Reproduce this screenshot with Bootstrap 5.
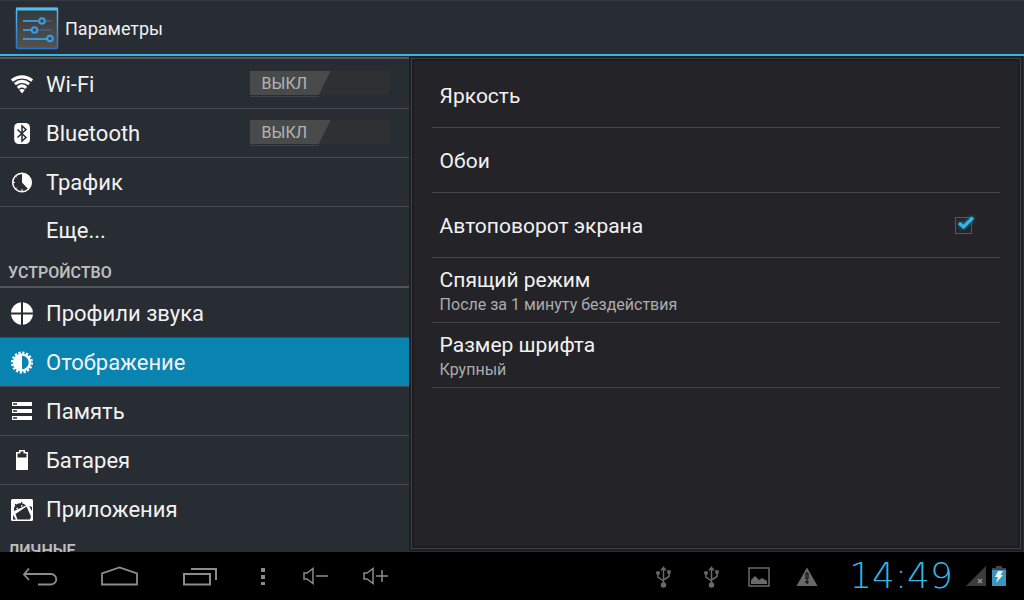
<!DOCTYPE html>
<html lang="ru">
<head>
<meta charset="utf-8">
<meta name="viewport" content="width=device-width, initial-scale=1">
<title>Параметры</title>
<link href="https://cdn.jsdelivr.net/npm/bootstrap@5.3.0/dist/css/bootstrap.min.css" rel="stylesheet">
<style>
body { background: #282c33; color: #f2f2f2; font-family: Roboto, sans-serif; font-size: 22px; line-height: 28px; }
a, a:hover { color: inherit; text-decoration: none; }
svg { display: block; flex: none; }
.topbar { height: 56px; background: #282c33; border-top: 1px solid #33373e; border-bottom: 2px solid #33b5e5; padding: 0 0 0 15px; }
.topbar h1 { font-size: 18px; line-height: 28px; font-weight: 400; margin: 2px 0 0 6px; }
.side { flex: 0 0 calc(40% - 1px); padding-top: 1px; }
.side ul { padding-top: 1px; }
.side-list { border-top: 2px solid #53565a; }
.side-row { height: 49px; border-bottom: 1px solid #494c50; padding: 2px 20px 0 10px; }
.side-row.bare { border-bottom-color: transparent; }
.side-row.more { padding-left: 46px; padding-top: 0; }
.side-row.current { background: #0983af; }
.side-row > a { gap: 12px; }
.side-head { height: 32px; border-bottom: 2px solid #53565a; padding: 3px 8px 0; margin: 0; font-size: 16px; line-height: 28px; font-weight: 600; color: #bdbdbd; }
.toggle { width: 139px; height: 26px; margin-bottom: 2px; }
.toggle input { appearance: none; display: block; width: 100%; height: 24px; margin: 0; background: #2f3031; }
.toggle span { left: 0; top: 0; width: 81px; height: 24px; padding-left: 12px; background: #494b4b; clip-path: polygon(0 0, 100% 0, 69px 100%, 0 100%); color: #b4b4b4; font-size: 16px; line-height: 25px; pointer-events: none; }
.toggle::after { content: ""; display: block; width: 69px; height: 1px; margin-top: 1px; background: #3b444b; }
.pane { margin: 2px 3px 3px 2px; border: 1px solid #3d4246; outline: 2px solid #1c2024; background: #242328; box-shadow: inset 0 0 0 2px #1b1c20; padding: 4px 20px 0; font-size: 21px; }
.pref { height: 65px; border-bottom: 1px solid #454549; padding: 2px 25px 0 8px; }
.pref.two-line { padding-top: 0; }
.pref small { display: block; font-size: 16px; line-height: 21px; color: #acacac; }
.check { position: relative; width: 20px; height: 20px; }
.check input { appearance: none; display: block; width: 17px; height: 17px; margin: 1px 0 0; border: 1px solid #57585c; background: transparent; }
.check svg { position: absolute; left: 2px; top: -1px; filter: drop-shadow(0 0 2px #128ab8); }
.check input:not(:checked) + svg { display: none; }
.sysbar { height: 48px; background: #000; color: #8c8c8c; }
.sysbar button { background: none; border: 0; padding: 0; color: inherit; width: 80px; height: 48px; display: flex; align-items: center; justify-content: center; }
.sysbar button.key-menu { width: 46px; }
.sysbar button.key-volume { width: 60px; }
.status { color: #696969; }
.clock { font-family: "DejaVu Sans ExtraLight", "DejaVu Sans Light", "DejaVu Sans", sans-serif; font-weight: 200; font-size: 36px; line-height: 48px; color: #33b5e5; width: 110px; text-align: center; }
</style>
</head>
<body class="vh-100 d-flex flex-column overflow-hidden">
<header class="topbar d-flex align-items-center flex-shrink-0">
  <svg width="44" height="44" viewBox="0 0 44 44">
    <defs><linearGradient id="tile" x2="0" y2="1"><stop stop-color="#35393b"/><stop offset="1" stop-color="#55524e"/></linearGradient><linearGradient id="rim" x2="0" y2="1"><stop stop-color="#52c0f2"/><stop offset="1" stop-color="#2a73c4"/></linearGradient></defs>
    <rect x="1.500" y="2.500" width="41" height="40" rx="1.500" fill="url(#tile)" stroke="url(#rim)" stroke-width="1.500"/>
    <path d="M1 1.500h42v3H1z" fill="#4fc1f4"/>
    <path d="M24 15H37M18 24H37" stroke="#3a6387" stroke-width="1.500"/>
    <path d="M8 15H23M8 24H17M8 33H32" stroke="#3796e0" stroke-width="1.800"/>
    <g fill="#3e4950" stroke="#3b9ce5" stroke-width="2"><circle cx="27" cy="15" r="2.800"/><circle cx="19.500" cy="24" r="2.800"/><circle cx="35" cy="32.500" r="2.800"/></g>
  </svg>
  <h1>Параметры</h1>
</header>
<main class="d-flex flex-grow-1 overflow-hidden">
  <nav class="side overflow-hidden" aria-label="Разделы">
    <ul class="side-list list-unstyled mb-0">
      <li class="side-row d-flex align-items-center justify-content-between">
        <a href="#" class="d-flex align-items-center"><svg width="24" height="24" viewBox="0 0 24 24" fill="none" stroke="#fff" stroke-width="3"><path d="M1.800 7.500Q12 .2 22.200 7.500M4.900 11.200Q12 5.500 19.100 11.200M7.800 14.800Q12 11 16.200 14.800"/><path d="M9.200 17Q12 15 14.800 17L12 20.500z" fill="#fff" stroke="none"/></svg>Wi-Fi</a>
        <label class="toggle position-relative"><input type="checkbox" role="switch" aria-label="Wi-Fi"><span class="position-absolute">ВЫКЛ</span></label>
      </li>
      <li class="side-row d-flex align-items-center justify-content-between">
        <a href="#" class="d-flex align-items-center"><svg width="24" height="24" viewBox="0 0 24 24"><rect x="4.200" y="1" width="15.800" height="21" rx="4.500" fill="#fff"/><path d="M7.500 7.500L16 15.500 12 19V4l4 3.500L7.500 15.500" fill="none" stroke="#282c33" stroke-width="1.500"/></svg>Bluetooth</a>
        <label class="toggle position-relative"><input type="checkbox" role="switch" aria-label="Bluetooth"><span class="position-absolute">ВЫКЛ</span></label>
      </li>
      <li class="side-row d-flex align-items-center"><a href="#" class="d-flex align-items-center"><svg width="24" height="24" viewBox="0 0 24 24"><circle cx="12" cy="11.500" r="9.300" fill="none" stroke="#fff" stroke-width="1.500"/><path d="M12 2v9.500l6.500 7A10 10 0 0 0 12 2z" fill="#fff"/><path d="M3 11.500h2M12 20v-2M5.500 5l1.300 1.300M5.500 18l1.300-1.300" stroke="#fff" stroke-width="1"/></svg>Трафик</a></li>
      <li class="side-row bare more d-flex align-items-center"><a href="#">Еще...</a></li>
    </ul>
    <h2 class="side-head">УСТРОЙСТВО</h2>
    <ul class="list-unstyled mb-0">
      <li class="side-row d-flex align-items-center"><a href="#" class="d-flex align-items-center"><svg width="24" height="24" viewBox="0 0 24 24"><path d="M11 .2V10.500H1A11 11 0 0 1 11 .2zM13 .2A11 11 0 0 1 23 10.500H13zM1 12.500H11V22.700A11 11 0 0 1 1 12.500zM23 12.500A11 11 0 0 1 13 22.700V12.500z" fill="#fff"/></svg>Профили звука</a></li>
      <li class="side-row current d-flex align-items-center"><a href="#" class="d-flex align-items-center" aria-current="page"><svg width="24" height="24" viewBox="0 0 24 24"><circle cx="12" cy="11.500" r="9.700" fill="none" stroke="#fff" stroke-width="2.600" stroke-dasharray="2.200 1.609"/><circle cx="12" cy="11.500" r="7.900" fill="none" stroke="#fff" stroke-width="2.400"/><path d="M12 3.500v16A8 8 0 0 1 12 3.500z" fill="#fff"/></svg>Отображение</a></li>
      <li class="side-row d-flex align-items-center"><a href="#" class="d-flex align-items-center"><svg width="24" height="24" viewBox="0 0 24 24"><path d="M2 2h20v4H2zM2 9h20v4H2zM2 16h20v4H2z" fill="#fff"/><path d="M3 4h4M3 11h4M3 18h4" stroke="#282c33" stroke-width="1.500"/></svg>Память</a></li>
      <li class="side-row d-flex align-items-center"><a href="#" class="d-flex align-items-center"><svg width="24" height="24" viewBox="0 0 24 24"><path d="M9 1h6v2h3v18H6V3h3z" fill="#fff"/><path d="M10.500 2.500h3v2h3v4h-9v-4h3z" fill="#282c33"/></svg>Батарея</a></li>
      <li class="side-row bare d-flex align-items-center"><a href="#" class="d-flex align-items-center"><svg width="24" height="24" viewBox="0 0 24 24"><rect x="1" y="1" width="22" height="22" rx="1.500" fill="#fff"/><g fill="#282c33"><path d="M4 13C3 6.500 10 2.500 16 7.500z"/><path d="M5.500 16L16.500 8.500 21 18.500 20 21.500H7.500z"/><path d="M3 17l3 4.500H3zM19 8l3 1v4z"/></g><path d="M5 6l2 2.500M11.500 4l.5 2" stroke="#282c33" stroke-width="1.200"/><path d="M6.500 10.500h1.500M11 8h1.500" stroke="#fff" stroke-width="1.500"/></svg>Приложения</a></li>
    </ul>
    <h2 class="side-head">ЛИЧНЫЕ</h2>
  </nav>
  <section class="pane flex-grow-1" aria-label="Отображение">
    <a href="#" class="pref d-flex align-items-center">Яркость</a>
    <a href="#" class="pref d-flex align-items-center">Обои</a>
    <div class="pref d-flex align-items-center justify-content-between"><label for="rotate">Автоповорот экрана</label>
      <span class="check"><input type="checkbox" id="rotate" checked><svg width="20" height="16" viewBox="0 0 20 16"><path d="M2 8l4.500 4L16 2.500" fill="none" stroke="#33b5e5" stroke-width="3.200"/></svg></span>
    </div>
    <a href="#" class="pref two-line d-flex align-items-center"><span>Спящий режим<small>После за 1 минуту бездействия</small></span></a>
    <a href="#" class="pref two-line d-flex align-items-center"><span>Размер шрифта<small>Крупный</small></span></a>
  </section>
</main>
<footer class="sysbar d-flex align-items-center justify-content-between flex-shrink-0">
  <div class="d-flex align-items-center">
    <button type="button" aria-label="Назад"><svg width="34" height="24" viewBox="0 0 34 24" fill="none" stroke="currentColor" stroke-width="1.800"><path d="M6 4.500L1 10.500L6 16M1.500 10H28a5 5 0 0 1 0 10.500H15"/></svg></button>
    <button type="button" aria-label="Домой"><svg width="38" height="24" viewBox="0 0 38 24" fill="none" stroke="currentColor" stroke-width="1.800"><path d="M1 20.500V9.500L18.500 3.500L36 9.500V20.500z"/></svg></button>
    <button type="button" aria-label="Недавние"><svg width="34" height="24" viewBox="0 0 34 24" fill="none" stroke="currentColor" stroke-width="2"><path d="M1 10h26v10.500H1zM8 5h25v11"/></svg></button>
    <button type="button" aria-label="Меню" class="key-menu"><svg width="4" height="20" viewBox="0 0 4 20" fill="currentColor"><path d="M0 2h4v4H0zM0 9h4v4H0zM0 16h4v3H0z"/></svg></button>
    <button type="button" aria-label="Тише" class="key-volume"><svg width="26" height="20" viewBox="0 0 26 20" fill="none" stroke="currentColor" stroke-width="1.500"><path d="M1 7h3L10 2.500v15L4 13H1zM13 10h12"/></svg></button>
    <button type="button" aria-label="Громче" class="key-volume"><svg width="26" height="20" viewBox="0 0 26 20" fill="none" stroke="currentColor" stroke-width="1.500"><path d="M1 7h3L10 2.500v15L4 13H1zM13 10h12M19 4v12"/></svg></button>
  </div>
  <div class="status d-flex align-items-center">
    <svg width="48" height="24" viewBox="0 0 48 24" fill="none" stroke="currentColor" stroke-width="1.500"><g id="usb"><path d="M7.500 4V21M5 6.500l2.500-3L10 6.500M2 9v4l5.500 4M13 8v4.500L7.500 16"/><circle cx="7.500" cy="21" r="2" fill="currentColor"/><circle cx="2" cy="9" r="1.200" fill="currentColor"/><path d="M12 7h2v2h-2z"/></g></svg>
    <svg width="44" height="24" viewBox="0 0 44 24" fill="none" stroke="currentColor" stroke-width="1.500"><use href="#usb"/></svg>
    <svg width="48" height="24" viewBox="0 0 48 24"><rect x="1" y="4" width="20" height="18" fill="none" stroke="currentColor" stroke-width="1.500"/><path d="M3 20v-4l4-4 4 4 3-2 5 3v3z" fill="currentColor"/></svg>
    <svg width="50" height="24" viewBox="0 0 50 24"><path d="M11 3.500L21.500 22H.5z" fill="currentColor"/><path d="M10 9h2v6h-2zM10 17h2v2h-2z" fill="none" stroke="#000"/></svg>
    <time class="clock">14:49</time>
    <svg class="ms-2 me-1" width="24" height="24" viewBox="0 0 24 24"><path d="M22 2v20H2z" fill="#3c3c3c"/><path d="M14 15l4 4M18 15l-4 4" stroke="#999" stroke-width="1.200"/></svg>
    <svg class="me-3" width="16" height="24" viewBox="0 0 16 24"><path d="M4 2h6v2h4v3H0V4h4z" fill="#444"/><path d="M0 6h14v16H0z" fill="#3a96bc"/><path d="M6 7h5L8.500 11H11L4 19l2-6H3z" fill="#e9f7ff"/></svg>
  </div>
</footer>
<script src="https://cdn.jsdelivr.net/npm/bootstrap@5.3.0/dist/js/bootstrap.bundle.min.js"></script>
</body>
</html>
